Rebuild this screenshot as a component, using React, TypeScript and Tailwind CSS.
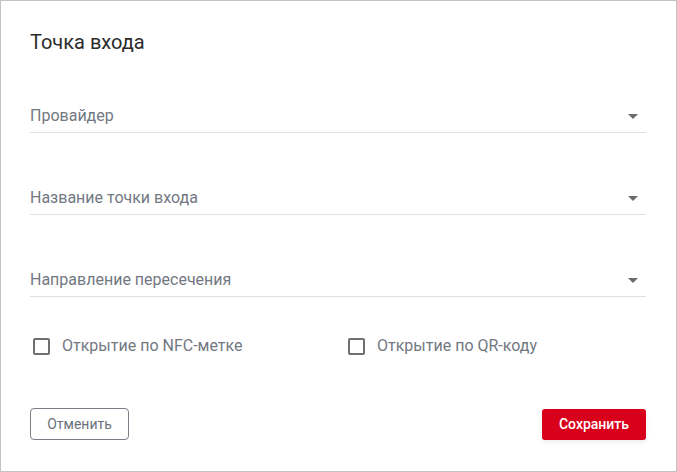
import React, { useState } from 'react';

const fields = ['Провайдер', 'Название точки входа', 'Направление пересечения'];

const Caret = () => (
  <svg width="10" height="5" viewBox="0 0 10 5" className="mr-[8px]">
    <polygon points="0,0 10,0 5,5" fill="#6b6b6b" />
  </svg>
);

const Check = ({ label, checked, onToggle }: { label: string; checked: boolean; onToggle: () => void }) => (
  <label className="flex items-center cursor-pointer select-none" onClick={onToggle}>
    <span
      className={`ml-[3px] w-[17px] h-[17px] rounded-[2px] border-2 ${checked ? 'bg-[#d9001b] border-[#d9001b]' : 'border-[#6f6f6f]'}`}
    />
    <span className="ml-[12px] text-[16px] leading-5 text-[#727882]">{label}</span>
  </label>
);

export default function App() {
  const [nfc, setNfc] = useState(false);
  const [qr, setQr] = useState(false);

  return (
    <div
      className="w-[677px] h-[472px] bg-white border border-[#c2c2c2] pt-[29px] pl-[29px] pr-[30px]"
      style={{ fontFamily: 'Roboto, "Noto Sans", sans-serif' }}
    >
      <h1 className="text-[20px] leading-6 text-[#2b2b2b]">Точка входа</h1>

      <div className="mt-[52px] flex flex-col gap-[55px]">
        {fields.map((f) => (
          <div key={f} className="flex items-center justify-between pb-[6px] border-b border-[#e0e0e0]">
            <span className="text-[16px] leading-5 text-[#727882]">{f}</span>
            <Caret />
          </div>
        ))}
      </div>

      <div className="mt-[39px] flex items-center">
        <div className="w-[315px]">
          <Check label="Открытие по NFC-метке" checked={nfc} onToggle={() => setNfc(!nfc)} />
        </div>
        <Check label="Открытие по QR-коду" checked={qr} onToggle={() => setQr(!qr)} />
      </div>

      <div className="mt-[52px] flex items-center justify-between">
        <button className="w-[99px] h-[32px] rounded-[4px] border border-[#7a7f87] text-[14px] text-[#6b717a]">
          Отменить
        </button>
        <button className="w-[104px] h-[31px] rounded-[3px] bg-[#d9001b] text-[14px] font-medium text-white shadow-[0_2px_4px_rgba(0,0,0,0.08)]">
          Сохранить
        </button>
      </div>
    </div>
  );
}
